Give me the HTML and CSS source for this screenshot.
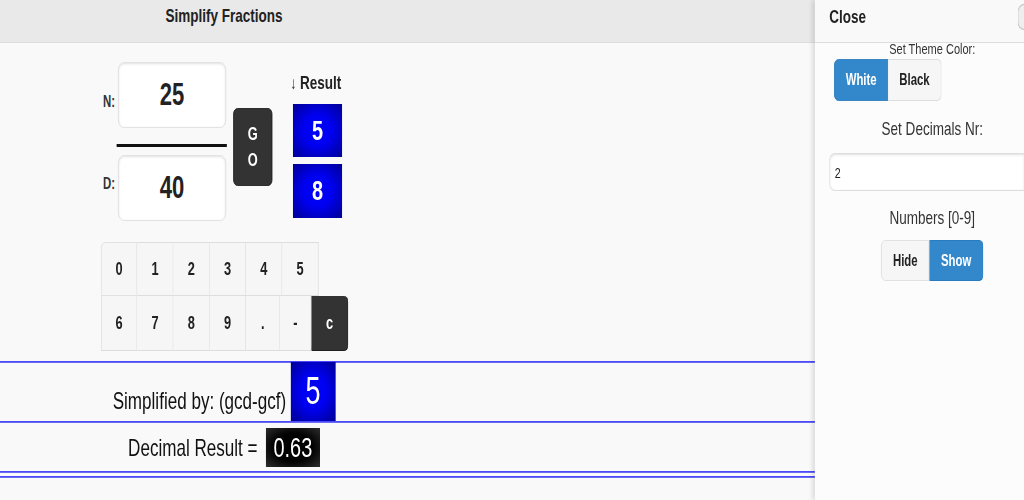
FILE: index.html
```html
<!DOCTYPE html>
<html lang="en">
<head>
  <meta charset="UTF-8">
  <title>Simplify Fractions</title>
  <link rel="stylesheet" href="styles.css">
</head>
<body>
  <div class="app">
    <div class="page">
      <header class="bar">
        <h1 class="bar-title">Simplify Fractions</h1>
      </header>
      <main class="content">
        <div class="calc">
          <div class="fraction">
            <label class="frac-label label-n" for="num">N:</label>
            <input class="frac-input" type="text" id="num" value="25">
            <div class="frac-line"></div>
            <label class="frac-label label-d" for="den">D:</label>
            <input class="frac-input" type="text" id="den" value="40">
          </div>
          <button class="btn-go">GO</button>
          <div class="result">
            <div class="result-label"><span class="arrow">&darr;</span> Result</div>
            <div class="result-box">5</div>
            <div class="result-box result-den">8</div>
          </div>
        </div>

        <div class="keypad">
          <div class="key-row">
            <button class="key key-first">0</button>
            <button class="key">1</button>
            <button class="key">2</button>
            <button class="key">3</button>
            <button class="key">4</button>
            <button class="key">5</button>
          </div>
          <div class="key-row">
            <button class="key">6</button>
            <button class="key">7</button>
            <button class="key">8</button>
            <button class="key">9</button>
            <button class="key key-dot">.</button>
            <button class="key key-minus">-</button>
            <button class="key key-clear">c</button>
          </div>
        </div>

        <hr class="rule">
        <div class="line-row gcd-row">
          <span class="row-text gcd-text">Simplified by: (gcd-gcf)</span>
          <span class="gcd-box">5</span>
        </div>
        <hr class="rule">
        <div class="line-row dec-row">
          <span class="row-text">Decimal Result =&nbsp;</span>
          <span class="dec-box">0.63</span>
        </div>
        <hr class="rule">
        <hr class="rule rule-second">
      </main>
    </div>

    <aside class="panel">
      <div class="panel-head">
        <span class="panel-close">Close</span>
        <span class="round-btn"></span>
      </div>
      <div class="panel-body">
        <div class="panel-small centered">Set Theme Color:</div>
        <div class="group group-left">
          <button class="seg seg-on">White</button>
          <button class="seg">Black</button>
        </div>
        <div class="panel-label centered">Set Decimals Nr:</div>
        <input class="panel-input" type="text" value="2">
        <div class="panel-label panel-label-num centered">Numbers [0-9]</div>
        <div class="group group-center centered">
          <button class="seg seg-hide">Hide</button>
          <button class="seg seg-on">Show</button>
        </div>
      </div>
    </aside>
  </div>
</body>
</html>
```

FILE: styles.css
```css
* {
  margin: 0;
  padding: 0;
  box-sizing: border-box;
}
html, body {
  overflow: hidden;
}
body {
  background: #f9f9f9;
  font-family: "Liberation Sans", Arial, sans-serif;
  color: #333333;
}
button, input {
  font-family: inherit;
}
/* the app is laid out at 1440px and squeezed into the 1024px window */
.app {
  display: flex;
  width: 1440px;
  height: 500px;
  overflow: hidden;
  transform: scaleX(0.71111);
  transform-origin: 0 0;
}
.page {
  flex: none;
  width: 1146px;
  background: #f9f9f9;
}

/* header */
.bar {
  height: 43px;
  background: #e9e9e9;
  border-bottom: 1px solid #dddddd;
}
.bar-title {
  width: 630px;
  padding-top: 5px;
  font-size: 19px;
  line-height: 22px;
  text-align: center;
  color: #222222;
}

/* fraction input */
.calc {
  display: flex;
  align-items: flex-start;
  padding: 19px 0 0 145px;
}
.fraction {
  display: grid;
  grid-template-columns: 21px 152px;
  align-items: center;
}
.frac-label {
  font-size: 16px;
  font-weight: bold;
  color: #333333;
}
.label-n {
  margin-top: 14px;
}
.label-d {
  margin-bottom: 8px;
}
.frac-input {
  width: 152px;
  height: 66px;
  border: 1px solid #dddddd;
  border-radius: 8px;
  background: #ffffff;
  box-shadow: inset 0 1px 3px rgba(0, 0, 0, .12);
  font-size: 31px;
  font-weight: bold;
  text-align: center;
  color: #222222;
}
.frac-input:focus {
  outline: 0;
}
.frac-line {
  grid-column: 1 / 3;
  justify-self: end;
  width: 155px;
  height: 3px;
  margin: 16px -1px 8px 0;
  background: #111111;
}
.btn-go {
  width: 55px;
  height: 78px;
  margin: 46px 0 0 10px;
  padding: 0 14px;
  border: 1px solid #1f1f1f;
  border-radius: 6px;
  background: #333333;
  color: #ffffff;
  font-size: 18px;
  font-weight: bold;
  line-height: 26px;
  word-break: break-all;
}
.result {
  margin-left: 25px;
  padding-top: 9px;
}
.result-label {
  font-size: 19px;
  font-weight: bold;
  line-height: 24px;
  color: #222222;
  margin-bottom: 8px;
  white-space: nowrap;
}
.arrow {
  font-weight: normal;
  font-size: 17px;
}
.result-box {
  width: 69px;
  height: 53px;
  margin-left: 4px;
  background: radial-gradient(ellipse at center, #0000f2 40%, #000094 100%);
  color: #ffffff;
  font-size: 28px;
  font-weight: bold;
  line-height: 53px;
  text-align: center;
}
.result-den {
  height: 54px;
  margin-top: 7px;
}

/* keypad */
.keypad {
  margin: 21px 0 10px 142px;
}
.key-row {
  display: flex;
}
.key {
  width: 51px;
  height: 54px;
  border: 1px solid #dddddd;
  border-left: 0;
  background: #f6f6f6;
  color: #222222;
  font-size: 18px;
  font-weight: bold;
}
.key-first {
  border-left: 1px solid #dddddd;
  border-top-left-radius: 6px;
}
.key-row + .key-row .key:first-child {
  border-left: 1px solid #dddddd;
}
.key-row + .key-row .key {
  height: 55px;
  border-top: 0;
}
.key-dot {
  width: 48px;
}
.key-minus {
  width: 44px;
}
.key-clear {
  width: 52px;
  background: #333333;
  border-color: #1f1f1f;
  border-radius: 0 6px 6px 0;
  color: #ffffff;
}

/* summary rows, separated by blue rules */
.rule {
  height: 2px;
  margin-bottom: -1px;
  border: 0;
  background: linear-gradient(#3a3aff, #7a7af0);
}
.rule-second {
  margin-top: 4px;
}
.line-row {
  display: flex;
  justify-content: center;
  width: 630px;
}
.gcd-row {
  align-items: flex-end;
}
.row-text {
  font-size: 24px;
  line-height: 26px;
  color: #111111;
}
.gcd-text {
  padding: 0 6px 7px 0;
}
.gcd-box {
  width: 63px;
  height: 59px;
  background: radial-gradient(ellipse at center, #0000f2 40%, #000094 100%);
  color: #ffffff;
  font-size: 38px;
  line-height: 59px;
  text-align: center;
}
.dec-row {
  align-items: center;
  padding: 6px 0 4px;
}
.dec-box {
  width: 76px;
  height: 39px;
  margin-left: 5px;
  background: radial-gradient(ellipse at center, #000000 50%, #2e2e2e 100%);
  color: #ffffff;
  font-size: 28px;
  line-height: 39px;
  text-align: center;
}

/* side panel */
.panel {
  flex: none;
  width: 294px;
  background: #fcfcfc;
  box-shadow: -4px 0 5px rgba(0, 0, 0, .12);
}
.panel-head {
  display: flex;
  align-items: center;
  height: 43px;
  padding: 0 0 8px 20px;
  background: #f9f9f9;
  border-bottom: 1px solid #dddddd;
}
.panel-close {
  font-size: 19px;
  font-weight: bold;
  color: #222222;
}
/* round icon button, cut by the window edge */
.round-btn {
  width: 9px;
  height: 26px;
  margin-left: auto;
  border: 1px solid #bbbbbb;
  border-right: 0;
  border-radius: 14px 0 0 14px / 13px 0 0 13px;
  background: #eeeeee;
}
.panel-body {
  padding: 0 0 0 20px;
}
.centered {
  padding-left: 16px;
  text-align: center;
}
.panel-small {
  font-size: 15.5px;
  line-height: 12px;
  color: #333333;
}
.group {
  display: flex;
  margin-top: 4px;
}
.group-left {
  margin-left: 7px;
}
.group-center {
  justify-content: center;
  margin-top: 12px;
}
.seg {
  width: 75px;
  height: 42px;
  border: 1px solid #dddddd;
  background: #f6f6f6;
  color: #222222;
  font-size: 16px;
  font-weight: bold;
}
.seg:first-child {
  border-radius: 6px 0 0 6px;
}
.seg:last-child {
  border-radius: 0 6px 6px 0;
  border-left: 0;
}
.seg-on {
  width: 76px;
  background: #3388cc;
  border-color: #2a7bbd;
  color: #ffffff;
}
.seg-hide {
  width: 68px;
  height: 41px;
}
.group-center .seg-on {
  height: 41px;
}
.panel-label {
  margin-top: 18px;
  font-size: 19px;
  line-height: 20px;
  color: #333333;
}
.panel-input {
  display: block;
  width: 100%;
  height: 38px;
  margin-top: 14px;
  padding: 0 7px;
  border: 1px solid #dddddd;
  border-right: 0;
  border-radius: 8px 0 0 8px;
  background: #ffffff;
  box-shadow: inset 0 1px 3px rgba(0, 0, 0, .12);
  font-size: 15px;
  color: #222222;
}
.panel-label-num {
  margin-top: 17px;
}
```
